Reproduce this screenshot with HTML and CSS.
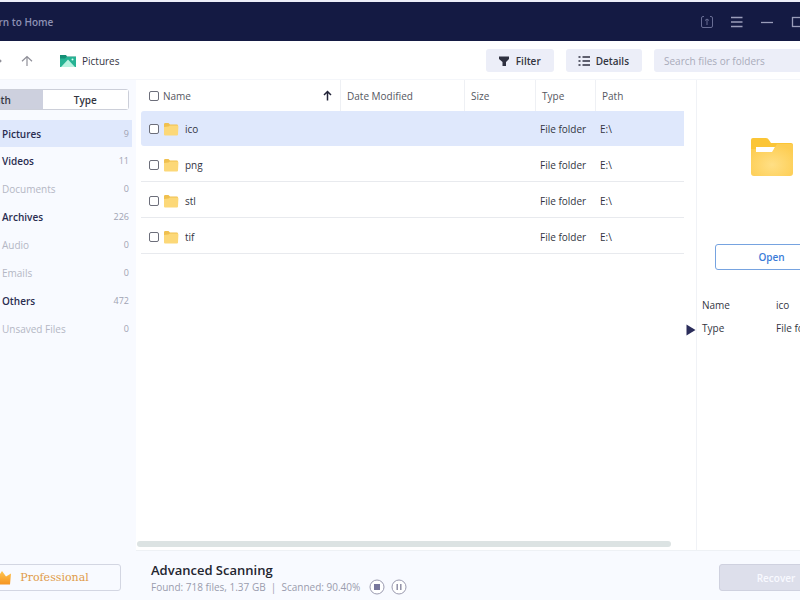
FILE: index.html
```html
<!DOCTYPE html>
<html lang="en">
<head>
  <meta charset="UTF-8">
  <meta name="viewport" content="width=device-width, initial-scale=1.0">
  <title>Data Recovery</title>
  <link rel="stylesheet" href="styles.css">
</head>
<body>
  <svg class="sprite" aria-hidden="true">
    <symbol id="folder" viewBox="0 0 16 14">
      <path d="M1 2.2Q1 1 2.2 1H5.5L7 2.6H13.8Q15 2.6 15 3.8V9H1Z" fill="#f0c04f"/>
      <path d="M1 5L5.5 4.6L7 3.4H14.4Q15.4 3.4 15.4 4.4L15 12.6Q15 13.6 14 13.6H2Q1 13.6 1 12.6Z" fill="#fcd878"/>
    </symbol>
  </svg>

  <div class="window">
    <header class="titlebar">
      <a class="home-link" href="#">Return to Home</a>
      <div class="window-buttons">
        <button type="button" aria-label="Upgrade">
          <svg width="14" height="14" viewBox="0 0 14 14" fill="none" stroke="#686d94"><path d="M4 1.5H3Q1.5 1.5 1.5 3V11Q1.5 12.5 3 12.5H4M10 1.5H11Q12.5 1.5 12.5 3V11Q12.5 12.5 11 12.5H4M5 5.500L7 4L9 5.500M7 4V10"/></svg>
        </button>
        <button type="button" aria-label="Menu">
          <svg width="14" height="14" viewBox="0 0 14 14" stroke="#9a9dba" stroke-width="1.300"><path d="M1 2.500H12.500M1 7H12.500M1 11.500H12.500"/></svg>
        </button>
        <button type="button" aria-label="Minimize">
          <svg width="14" height="14" viewBox="0 0 14 14" stroke="#9a9dba" stroke-width="1.300"><path d="M1 7.500H13"/></svg>
        </button>
        <button type="button" aria-label="Maximize">
          <svg width="14" height="14" viewBox="0 0 14 14" fill="none" stroke="#9a9dba" stroke-width="1.300"><rect x="2.500" y="2.500" width="10" height="9"/></svg>
        </button>
      </div>
    </header>

    <div class="toolbar">
      <button type="button" class="nav-btn" aria-label="Forward">
        <svg width="12" height="12" viewBox="0 0 12 12" fill="none" stroke="#8f8f98" stroke-width="1.2"><path d="M1 6H11M7 2L11 6L7 10"/></svg>
      </button>
      <button type="button" class="nav-btn" aria-label="Up">
        <svg width="12" height="12" viewBox="0 0 12 12" fill="none" stroke="#8f8f98" stroke-width="1.2"><path d="M6 11V1.500M1 6.300L6 1.500L11 6.300"/></svg>
      </button>
      <div class="crumb">
        <svg width="16" height="14" viewBox="0 0 16 14">
          <path d="M0 1H6L7 2.500H16V13H0Z" fill="#158f76"/>
          <path d="M0 4.500L5 4.500L6.500 3H16V13H0Z" fill="#26b394"/>
          <path d="M1 13L8 5.500L15 13Z" fill="#b9f3e0"/>
          <circle cx="12.500" cy="5.500" r="1" fill="#d8fff2"/>
        </svg>
        <span>Pictures</span>
      </div>
      <button type="button" class="tool-btn">
        <svg width="12" height="12" viewBox="0 0 12 12" fill="#2f3140"><path d="M1 1.500H11V4L8 7V11H4.500V7L1 4Z"/></svg>
        Filter
      </button>
      <button type="button" class="tool-btn">
        <svg width="12" height="12" viewBox="0 0 12 12" stroke="#2f3140" stroke-width="1.400"><path d="M0.500 2H2.500M4.500 2H12M0.500 6H2.500M4.500 6H12M0.500 10H2.500M4.500 10H12"/></svg>
        Details
      </button>
      <input class="search" type="text" placeholder="Search files or folders" aria-label="Search files or folders">
    </div>

    <div class="content">
      <aside class="sidebar">
        <div class="tabs">
          <button type="button" class="tab">Path</button>
          <button type="button" class="tab active">Type</button>
        </div>
        <nav class="types">
          <a class="type selected" href="#"><span>Pictures</span><span class="count">9</span></a>
          <a class="type" href="#"><span>Videos</span><span class="count">11</span></a>
          <a class="type empty" href="#"><span>Documents</span><span class="count">0</span></a>
          <a class="type" href="#"><span>Archives</span><span class="count">226</span></a>
          <a class="type empty" href="#"><span>Audio</span><span class="count">0</span></a>
          <a class="type empty" href="#"><span>Emails</span><span class="count">0</span></a>
          <a class="type" href="#"><span>Others</span><span class="count">472</span></a>
          <a class="type empty" href="#"><span>Unsaved Files</span><span class="count">0</span></a>
        </nav>
        <button type="button" class="pro-btn">
          <svg width="20" height="16" viewBox="0 0 20 16">
            <defs><linearGradient id="gold" x1="0" y1="0" x2="0" y2="1"><stop offset="0" stop-color="#ffc650"/><stop offset="1" stop-color="#f59422"/></linearGradient></defs>
            <path d="M1 4L6 7L10 1L14 6.500L19 3.500L18 14.500H2Z" fill="url(#gold)"/>
          </svg>
          Professional
        </button>
      </aside>

      <div class="main">
        <div class="panes">
          <section class="files">
            <table class="file-table">
              <colgroup>
                <col><col class="col-date"><col class="col-size"><col class="col-type"><col class="col-path">
              </colgroup>
              <thead>
                <tr>
                  <th>
                    <div class="name-cell">
                      <input type="checkbox" id="all"><label for="all">Name</label>
                      <svg class="sort" width="9" height="11" viewBox="0 0 9 11" fill="none" stroke="#222438" stroke-width="1.500"><path d="M4.500 10.500V1.500M1 5L4.500 1.500L8 5"/></svg>
                    </div>
                  </th>
                  <th>Date Modified</th>
                  <th>Size</th>
                  <th>Type</th>
                  <th>Path</th>
                </tr>
              </thead>
              <tbody>
                <tr class="selected">
                  <td><div class="name-cell"><input type="checkbox" id="f1"><svg class="folder"><use href="#folder"/></svg><label for="f1">ico</label></div></td>
                  <td></td><td></td><td>File folder</td><td>E:\</td>
                </tr>
                <tr>
                  <td><div class="name-cell"><input type="checkbox" id="f2"><svg class="folder"><use href="#folder"/></svg><label for="f2">png</label></div></td>
                  <td></td><td></td><td>File folder</td><td>E:\</td>
                </tr>
                <tr>
                  <td><div class="name-cell"><input type="checkbox" id="f3"><svg class="folder"><use href="#folder"/></svg><label for="f3">stl</label></div></td>
                  <td></td><td></td><td>File folder</td><td>E:\</td>
                </tr>
                <tr>
                  <td><div class="name-cell"><input type="checkbox" id="f4"><svg class="folder"><use href="#folder"/></svg><label for="f4">tif</label></div></td>
                  <td></td><td></td><td>File folder</td><td>E:\</td>
                </tr>
              </tbody>
            </table>
            <div class="scrollbar"></div>
          </section>

          <aside class="preview">
            <button type="button" class="collapse" aria-label="Collapse preview">
              <svg width="10" height="12" viewBox="0 0 10 12"><path d="M0.500 0.500L9.500 6L0.500 11.500Z" fill="#2b2d5b"/></svg>
            </button>
            <svg class="big-folder" width="44" height="40" viewBox="0 0 44 40">
              <defs><radialGradient id="sand" cx="0.500" cy="0.650" r="0.650"><stop offset="0" stop-color="#ffdf85"/><stop offset="1" stop-color="#fdcd52"/></radialGradient></defs>
              <path d="M1 3Q1 1 3 1H16Q18 1 19 3L21 6H41Q43 6 43 8V20H1Z" fill="#fbc536"/>
              <path d="M1 12H24L27 7H41Q43 7 43 9V36Q43 39 40 39H4Q1 39 1 36Z" fill="url(#sand)"/>
              <path d="M6 10H25L22 15H6Z" fill="#fff"/>
            </svg>
            <button type="button" class="open-btn">Open</button>
            <dl class="info">
              <dt>Name</dt><dd>ico</dd>
              <dt>Type</dt><dd>File folder</dd>
            </dl>
          </aside>
        </div>

        <footer class="status">
          <div class="progress">
            <h1>Advanced Scanning</h1>
            <div class="stats">
              <span>Found: 718 files, 1.37 GB &nbsp;|&nbsp; Scanned: 90.40%</span>
              <button type="button" aria-label="Stop">
                <svg width="16" height="16" viewBox="0 0 16 16"><circle cx="8" cy="8" r="7" fill="#fff" stroke="#9b9bb0"/><rect x="5" y="5" width="6" height="6" fill="#77779c"/></svg>
              </button>
              <button type="button" aria-label="Pause">
                <svg width="16" height="16" viewBox="0 0 16 16"><circle cx="8" cy="8" r="7" fill="#fff" stroke="#9b9bb0"/><path d="M6.200 5V11M9.800 5V11" stroke="#88889f" stroke-width="1.400"/></svg>
              </button>
            </div>
          </div>
          <button type="button" class="recover-btn">Recover</button>
        </footer>
      </div>
    </div>
  </div>
</body>
</html>
```
FILE: styles.css
```css
* {
  box-sizing: border-box;
}
body {
  margin: 0;
  overflow: hidden;
  font-family: "Open Sans", "Noto Sans", sans-serif;
  font-size: 10px;
  line-height: 14px;
  color: #33353f;
  background-color: #fff;
}
button,
input {
  font: inherit;
  color: inherit;
}
button {
  display: flex;
  align-items: center;
  justify-content: center;
  padding: 0;
  border: none;
  background: none;
  cursor: pointer;
}
a {
  text-decoration: none;
}
svg {
  display: block;
  flex: none;
}
.sprite {
  position: absolute;
  width: 0;
  height: 0;
}

/* the window runs past both sides of the viewport */
.window {
  display: flex;
  flex-direction: column;
  height: 100vh;
  margin: 0 -46px 0 -44px;
  border-top: 2px solid #eceef8;
}

.titlebar {
  display: flex;
  align-items: center;
  justify-content: space-between;
  height: 39px;
  padding: 1px 42px 0 20px;
  background-color: #141a43;
}
.home-link {
  color: #8d91b4;
  font-weight: 600;
}
.window-buttons {
  display: flex;
  gap: 16px;
}

.toolbar {
  display: flex;
  align-items: center;
  height: 39px;
  padding: 1px 0 0 34px;
  border-bottom: 1px solid #f4f6fa;
}
.nav-btn {
  margin-right: 19px;
}
.crumb {
  display: flex;
  align-items: center;
  gap: 6px;
  margin: 0 auto 0 8px;
}
.tool-btn {
  gap: 6px;
  height: 23px;
  padding: 0 13px 0 12px;
  margin-right: 12px;
  border-radius: 3px;
  background-color: #eceef8;
  font-weight: 600;
}
.search {
  width: 192px;
  height: 23px;
  padding: 0 10px;
  border: none;
  border-radius: 3px;
  background-color: #eceef8;
}
.search::placeholder {
  color: #a9abba;
  opacity: 1;
}

.content {
  display: flex;
  flex: 1;
  min-height: 0;
}
.sidebar {
  display: flex;
  flex-direction: column;
  width: 180px;
  padding: 9px 4px 9px 0;
  background-color: #f8faff;
}
.tabs {
  display: flex;
  margin-right: 3px;
  border: 1px solid #cccfd9;
  border-radius: 3px;
}
.tab {
  flex: 1;
  height: 19px;
  background-color: #cdd0de;
  font-weight: 600;
}
.tab.active {
  background-color: #fff;
}
.types {
  margin-top: 10px;
}
.type {
  display: flex;
  align-items: center;
  justify-content: space-between;
  height: 28px;
  padding: 0 3px 0 46px;
  color: #2a2d50;
  font-weight: 600;
}
.type.selected {
  height: 27px;
  background-color: #dfe8fc;
}
.type.empty {
  color: #b4b7c4;
  font-weight: 400;
}
.count {
  color: #9fa3b2;
  font-size: 9px;
  font-weight: 400;
}
.pro-btn {
  gap: 8px;
  height: 27px;
  margin: auto 11px 0 0;
  padding-left: 4px;
  border: 1px solid #d3d6e2;
  border-radius: 3px;
  color: #e09a48;
  font-family: "DejaVu Serif", serif;
  font-size: 11px;
}

.main {
  display: flex;
  flex: 1;
  flex-direction: column;
  min-width: 0;
}
.panes {
  display: flex;
  flex: 1;
}
.files {
  display: flex;
  flex: 1;
  flex-direction: column;
  justify-content: space-between;
  padding: 0 12px 3px 5px;
}
.file-table {
  width: 100%;
  table-layout: fixed;
  border-collapse: separate;
  border-spacing: 0;
}
.col-date {
  width: 124px;
}
.col-size {
  width: 71px;
}
.col-type {
  width: 60px;
}
.col-path {
  width: 89px;
}
th {
  height: 31px;
  padding: 0 0 0 6px;
  border-left: 1px solid #eef0f4;
  color: #555761;
  font-weight: 400;
  text-align: left;
}
th:first-child {
  padding-left: 8px;
  border-left: none;
}
td {
  height: 36px;
  padding: 2px 0 0 5px;
  border-bottom: 1px solid #e8eaee;
}
td:first-child {
  padding-left: 8px;
}
.selected td {
  height: 35px;
  padding-top: 0;
  border-bottom: none;
  background-color: #dfe8fc;
}
.selected td:first-child {
  border-radius: 3px 0 0 3px;
}
.name-cell {
  display: flex;
  align-items: center;
}
.name-cell input {
  appearance: none;
  width: 10px;
  height: 10px;
  margin: 0 4px 0 0;
  border: 1px solid #6c6e7a;
  border-radius: 2px;
  background-color: #fff;
}
.folder {
  width: 16px;
  height: 14px;
  margin-right: 6px;
}
.sort {
  margin: 0 8px 0 auto;
}
.scrollbar {
  height: 6px;
  margin: 0 13px 0 -4px;
  border-radius: 3px;
  background-color: #dce3e3;
}

.preview {
  position: relative;
  display: flex;
  flex-direction: column;
  align-items: center;
  width: 150px;
  padding-top: 57px;
  border-left: 1px solid #f0f2f6;
}
.collapse {
  position: absolute;
  top: 244px;
  left: -11px;
}
.open-btn {
  width: 114px;
  height: 26px;
  margin-top: 67px;
  border: 1px solid #76a3e0;
  border-radius: 3px;
  color: #3b7cd8;
  font-weight: 600;
}
.info {
  display: grid;
  grid-template-columns: 74px 1fr;
  row-gap: 9px;
  align-self: stretch;
  margin: 28px 0 0;
  padding-left: 5px;
}
.info dd {
  margin: 0;
}

.status {
  display: flex;
  align-items: center;
  justify-content: space-between;
  height: 50px;
  padding: 4px 13px 0 15px;
  border-top: 1px solid #eef1f5;
  background-color: #f8faff;
}
.status h1 {
  margin: 0;
  color: #23252f;
  font-size: 13px;
  font-weight: 600;
  line-height: 18px;
}
.stats {
  display: flex;
  align-items: center;
  gap: 6px;
  color: #9a9cad;
}
.stats span {
  margin-right: 3px;
}
.recover-btn {
  width: 114px;
  height: 27px;
  border: 1px solid #cfd1df;
  border-radius: 3px;
  background-color: #dddfeb;
  color: #f8f9ff;
  font-weight: 600;
}
```
